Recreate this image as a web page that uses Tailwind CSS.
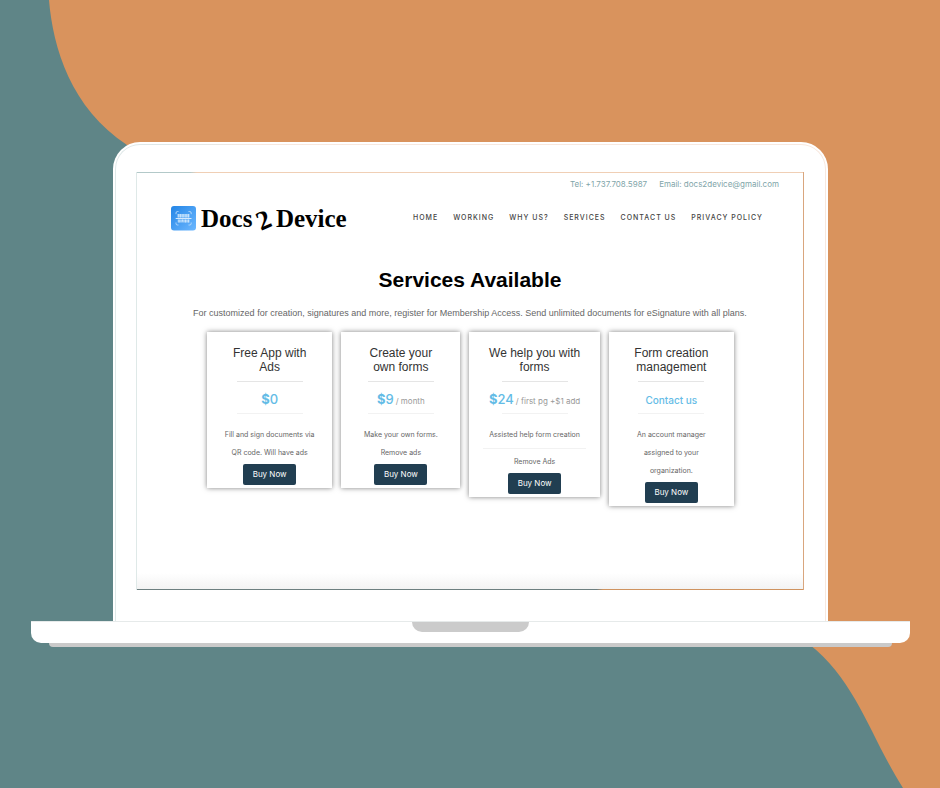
<!DOCTYPE html>
<html lang="en">
<head>
<meta charset="utf-8">
<meta name="viewport" content="width=device-width, initial-scale=1">
<title>Docs2Device – Services</title>
<script src="https://cdn.jsdelivr.net/npm/@tailwindcss/browser@4"></script>
</head>
<body class="bg-[#5f8587] font-['Inter',sans-serif]">
<div class="relative isolate flex min-h-screen items-center overflow-hidden">
  <!-- Backdrop wave -->
  <svg class="absolute inset-0 -z-10 h-full w-full" viewBox="0 0 940 788" preserveAspectRatio="none" aria-hidden="true">
    <path fill="#d9935d" d="M49 0C53 48 71 108 127 145C300 255 640 520 810 645C856 681 871 738 903 788H940V0Z"/>
  </svg>

  <div class="w-full pr-[30px] pl-[31px]">
    <!-- Lid -->
    <div class="mx-[82px] rounded-t-[27px] bg-white px-[2px] pt-[2px]">
      <div class="rounded-t-[25px] bg-linear-to-r from-[#dfe8e8] from-10% to-[#f8e8de] to-20% px-px pt-px">
      <div class="rounded-t-[24px] bg-white pt-[27px] pr-[21px] pb-[31px] pl-[20px]">
        <!-- Screen -->
        <div class="border-r border-l border-r-[#d9a67e] border-l-[#dfe9e8]">
          <div class="h-px bg-linear-to-r from-[#b3c9c9] from-8% to-[#f0cfb5] to-9%"></div>
          <div class="bg-linear-to-t from-[#f3f3f3] to-white to-[16px] pb-[83px]">
            <header>
              <div class="flex justify-end gap-[12px] pt-[5px] pr-[24px] text-[8px] leading-[12px] text-[#7fa5a9]">
                <a href="tel:+17377085987">Tel: +1.737.708.5987</a>
                <a href="mailto:docs2device@gmail.com">Email: docs2device@gmail.com</a>
              </div>
              <div class="mt-[16px] flex items-center justify-between pr-[40px] pl-[34px]">
                <a href="#" class="flex items-center gap-[5px] font-['Liberation_Serif',serif] text-[25px] leading-[25px] font-bold text-black">
                  <svg class="size-[25px]" viewBox="0 0 25 25" aria-hidden="true">
                    <defs><linearGradient id="tile" x1="0" y1="0" x2="1" y2="1"><stop offset="0" stop-color="#2385e6"/><stop offset="1" stop-color="#6db8ff"/></linearGradient></defs>
                    <rect width="25" height="24.500" rx="3" fill="url(#tile)"/>
                    <path d="M5 8.200V7Q5 5.500 6.500 5.500H7.500M17.500 5.500H18.700Q20.200 5.500 20.200 7V8.200M20.200 16.500V17.500Q20.200 19 18.700 19H17.500M7.500 19H6.500Q5 19 5 17.500V16.500" fill="none" stroke="#c9e3fc" stroke-width=".8"/>
                    <path d="M6.700 8H18.500V11.500H6.700ZM6.700 13.500H18.500V16.500H6.700Z" fill="#b9dcfb" fill-opacity=".75"/>
                    <path d="M7.200 8V11.500M9.500 8V11.500M12 8V11.500M15 8V11.500M17.500 8V11.500M8 13.500V16.500M11.500 13.500V15.500M14.500 13.500V16.500M17.500 13.500V16.500" stroke="#d9ecfe" stroke-width=".7"/>
                    <path d="M4.700 12.500H20.500" stroke="#e4f2ff" stroke-width=".9"/>
                  </svg>
                  <span class="flex gap-[5px]"><span>Docs</span><span class="relative top-[2px] rotate-[-24deg] text-[27px]">2</span><span>Device</span></span>
                </a>
                <nav class="flex gap-[15px] text-[7px] leading-[12px] font-medium tracking-[1px] text-[#444]">
                  <a href="#">HOME</a>
                  <a href="#">WORKING</a>
                  <a href="#">WHY US?</a>
                  <a href="#">SERVICES</a>
                  <a href="#">CONTACT US</a>
                  <a href="#">PRIVACY POLICY</a>
                </nav>
              </div>
            </header>

            <main class="text-center">
              <h1 class="mt-[37px] font-['Liberation_Sans',sans-serif] text-[21px] leading-[24px] font-bold text-black">Services Available</h1>
              <p class="mt-[15px] font-['Liberation_Sans',sans-serif] text-[9px] leading-[12px] text-[#666]">For customized for creation, signatures and more, register for Membership Access. Send unlimited documents for eSignature with all plans.</p>

              <div class="mr-[69px] ml-[70px] mt-[13px] grid grid-cols-[125fr_119fr_130fr_125fr] items-start gap-[9px] text-[7px] leading-[18px] text-[#666]">
                <section class="bg-white px-[14px] pt-[14px] pb-[3px] shadow-[0_0_5px_rgba(0,0,0,0.5)]">
                  <h2 class="font-['Liberation_Sans',sans-serif] text-[12px] leading-[14px] text-[#333]">Free App with<br>Ads</h2>
                  <div class="mx-auto mt-[7px] flex h-[33px] w-[66px] items-baseline justify-center border-y border-t-[#e5e5e5] border-b-[#f2f2f2] text-[13px] leading-[34px] font-medium whitespace-nowrap text-[#64bce6]"><b>$</b>0</div>
                  <p class="mt-[12px] -mx-[6px]">Fill and sign documents via<br>QR code. Will have ads</p>
                  <button class="mt-[2px] block mx-auto h-[21px] w-[53px] rounded-[2px] bg-[#213e51] pb-px text-[8px] leading-[20px] text-white">Buy Now</button>
                </section>

                <section class="bg-white px-[14px] pt-[14px] pb-[3px] shadow-[0_0_5px_rgba(0,0,0,0.5)]">
                  <h2 class="font-['Liberation_Sans',sans-serif] text-[12px] leading-[14px] text-[#333]">Create your<br>own forms</h2>
                  <div class="mx-auto mt-[7px] flex h-[33px] w-[66px] items-baseline justify-center border-y border-t-[#e5e5e5] border-b-[#f2f2f2] text-[13px] leading-[34px] font-medium whitespace-nowrap text-[#64bce6]"><b>$</b>9<span class="ml-[2px] text-[8px] font-normal text-[#999]">/ month</span></div>
                  <p class="mt-[12px] -mx-[6px]">Make your own forms.<br>Remove ads</p>
                  <button class="mt-[2px] block mx-auto h-[21px] w-[53px] rounded-[2px] bg-[#213e51] pb-px text-[8px] leading-[20px] text-white">Buy Now</button>
                </section>

                <section class="bg-white px-[14px] pt-[14px] pb-[3px] shadow-[0_0_5px_rgba(0,0,0,0.5)]">
                  <h2 class="font-['Liberation_Sans',sans-serif] text-[12px] leading-[14px] text-[#333]">We help you with<br>forms</h2>
                  <div class="mx-auto mt-[7px] flex h-[33px] w-[66px] items-baseline justify-center border-y border-t-[#e5e5e5] border-b-[#f2f2f2] text-[13px] leading-[34px] font-medium whitespace-nowrap text-[#64bce6]"><b>$</b>24<span class="ml-[2px] text-[8px] font-normal text-[#999]">/ first pg +$1 add</span></div>
                  <ul class="mt-[12px]">
                    <li class="border-b border-[#f2f2f2] pb-[4px]">Assisted help form creation</li>
                    <li class="pt-[4px]">Remove Ads</li>
                  </ul>
                  <button class="mt-[2px] block mx-auto h-[21px] w-[53px] rounded-[2px] bg-[#213e51] pb-px text-[8px] leading-[20px] text-white">Buy Now</button>
                </section>

                <section class="bg-white px-[14px] pt-[14px] pb-[3px] shadow-[0_0_5px_rgba(0,0,0,0.5)]">
                  <h2 class="font-['Liberation_Sans',sans-serif] text-[12px] leading-[14px] text-[#333]">Form creation<br>management</h2>
                  <div class="mx-auto mt-[7px] flex h-[33px] w-[66px] items-baseline justify-center border-y border-t-[#e5e5e5] border-b-[#f2f2f2] text-[10px] leading-[36px] font-medium whitespace-nowrap text-[#64bce6]">Contact us</div>
                  <p class="mt-[12px] -mx-[6px]">An account manager<br>assigned to your<br>organization.</p>
                  <button class="mt-[2px] block mx-auto h-[21px] w-[53px] rounded-[2px] bg-[#213e51] pb-px text-[8px] leading-[20px] text-white">Buy Now</button>
                </section>
              </div>
            </main>
          </div>
          <div class="h-px bg-linear-to-r from-[#6d7f80] from-69% to-[#cf935f] to-70%"></div>
        </div>
      </div>
      </div>
    </div>

    <!-- Base -->
    <div class="h-[22px] rounded-b-[10px] border-t border-[#e6eaea] bg-white">
      <div class="mx-auto h-[10px] w-[117px] rounded-b-[10px] bg-[#cbcbcb]"></div>
    </div>
    <div class="mx-[18px] h-[4px] rounded-b-[4px] bg-[#cacaca]"></div>
  </div>
</div>
</body>
</html>
